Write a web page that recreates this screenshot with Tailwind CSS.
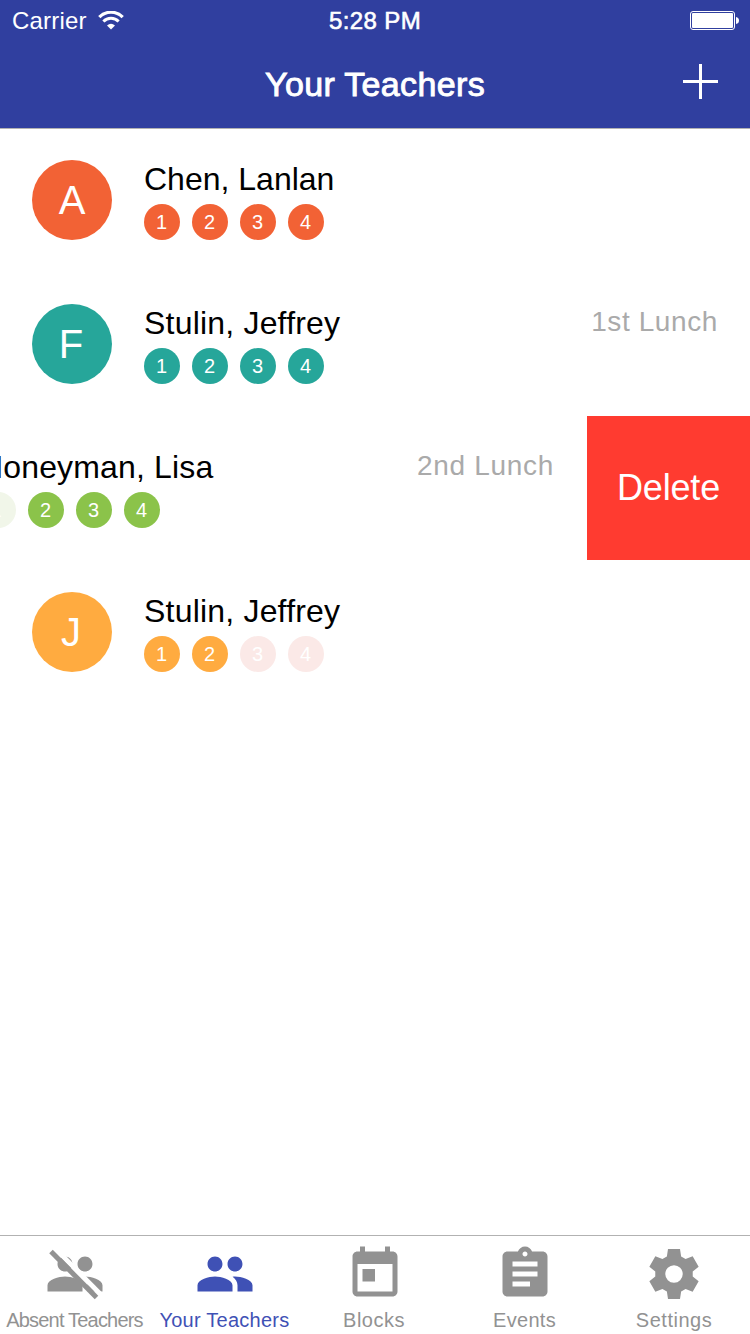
<!DOCTYPE html>
<html lang="en">
<head>
<meta charset="utf-8">
<title>Your Teachers</title>
<script src="https://cdn.jsdelivr.net/npm/@tailwindcss/browser@4"></script>
</head>
<body class="bg-white">
<div class="flex h-[1334px] w-[750px] flex-col overflow-hidden bg-white font-['Liberation_Sans',Arial,sans-serif] text-black">
  <header class="h-[129px] shrink-0 border-b border-[#b2b2b2] bg-[#303f9f] text-white">
    <div class="grid h-10 grid-cols-3 items-center text-2xl">
      <div class="flex items-center gap-[11px] pt-0.5 pl-3">
        <span class="tracking-[0.2px]">Carrier</span>
        <svg class="h-5 w-[26px]" viewBox="0 0 26 20" fill="none" stroke="#fff">
          <path d="M1.300 6.200A16.200 16.200 0 0 1 24.700 6.200" stroke-width="3.200"/>
          <path d="M5.400 10.500A10.600 10.600 0 0 1 20.600 10.500" stroke-width="3"/>
          <path d="M13 18.500L9 14.500Q13 11 17 14.500Z" fill="#fff" stroke="none"/>
        </svg>
      </div>
      <div class="pt-0.5 text-center tracking-[0.4px] [-webkit-text-stroke:0.6px_white]">5:28 PM</div>
      <div class="flex justify-end pr-2.5">
        <svg class="h-5 w-[50px]" viewBox="0 0 50 20">
          <rect x=".5" y="1.5" width="44" height="18" rx="2.5" fill="none" stroke="#fff"/>
          <rect x="2" y="3" width="41" height="15" rx="1" fill="#fff"/>
          <path d="M46 7q3 .5 3 3.500t-3 3.500z" fill="#fff"/>
        </svg>
      </div>
    </div>
    <div class="grid h-[88px] grid-cols-[1fr_auto_1fr] items-center">
      <span></span>
      <h1 class="text-[34px] tracking-[0.35px] [-webkit-text-stroke:0.9px_white]">Your Teachers</h1>
      <svg class="mr-8 mb-1.5 size-[35px] justify-self-end" viewBox="0 0 35 35" fill="#fff"><path d="M16 0h3v16h16v3H19v16h-3V19H0v-3h16z"/></svg>
    </div>
  </header>

  <main class="-mt-px flex-1">
    <section class="flex h-36 items-start px-8 pt-8">
      <div class="mr-8 flex size-20 items-center justify-center rounded-full bg-[#f26235] text-[40px] text-white">A</div>
      <div class="flex-1">
        <h2 class="h-11 text-[32px] leading-[38px]">Chen, Lanlan</h2>
        <div class="flex gap-3 text-xl text-white">
          <span class="flex size-9 items-center justify-center rounded-full bg-[#f26235] pr-px">1</span>
          <span class="flex size-9 items-center justify-center rounded-full bg-[#f26235] pr-px">2</span>
          <span class="flex size-9 items-center justify-center rounded-full bg-[#f26235] pr-px">3</span>
          <span class="flex size-9 items-center justify-center rounded-full bg-[#f26235] pr-px">4</span>
        </div>
      </div>
    </section>

    <section class="flex h-36 items-start px-8 pt-8">
      <div class="mr-8 flex size-20 items-center justify-center rounded-full bg-[#26a69a] pr-0.5 text-[40px] text-white">F</div>
      <div class="flex-1">
        <h2 class="h-11 text-[32px] leading-[38px] tracking-[0.2px]">Stulin, Jeffrey</h2>
        <div class="flex gap-3 text-xl text-white">
          <span class="flex size-9 items-center justify-center rounded-full bg-[#26a69a] pr-px">1</span>
          <span class="flex size-9 items-center justify-center rounded-full bg-[#26a69a] pr-px">2</span>
          <span class="flex size-9 items-center justify-center rounded-full bg-[#26a69a] pr-px">3</span>
          <span class="flex size-9 items-center justify-center rounded-full bg-[#26a69a] pr-px">4</span>
        </div>
      </div>
      <p class="text-[28px] leading-[36px] tracking-[0.6px] text-[#aaa]">1st Lunch</p>
    </section>

    <section class="flex h-36 justify-end overflow-hidden">
      <div class="flex w-[750px] shrink-0 items-start px-8 pt-8">
        <div class="mr-8 flex size-20 items-center justify-center rounded-full bg-[#8bc34a] text-[40px] text-white">H</div>
        <div class="flex-1">
          <h2 class="h-11 text-[32px] leading-[38px] tracking-[0.15px]">Honeyman, Lisa</h2>
          <div class="flex gap-3 text-xl text-white">
            <span class="flex size-9 items-center justify-center rounded-full bg-[#f1f6e9] pr-1">1</span>
            <span class="flex size-9 items-center justify-center rounded-full bg-[#8bc34a] pr-px">2</span>
            <span class="flex size-9 items-center justify-center rounded-full bg-[#8bc34a] pr-px">3</span>
            <span class="flex size-9 items-center justify-center rounded-full bg-[#8bc34a] pr-px">4</span>
          </div>
        </div>
        <p class="text-[28px] leading-[36px] tracking-[0.7px] text-[#aaa]">2nd Lunch</p>
      </div>
      <div class="ml-px flex w-[163px] shrink-0 items-center justify-center bg-[#ff3b30] text-4xl tracking-[-0.15px] text-white">Delete</div>
    </section>

    <section class="flex h-36 items-start px-8 pt-8">
      <div class="mr-8 flex size-20 items-center justify-center rounded-full bg-[#ffab40] pr-0.5 text-[40px] text-white">J</div>
      <div class="flex-1">
        <h2 class="h-11 text-[32px] leading-[38px] tracking-[0.2px]">Stulin, Jeffrey</h2>
        <div class="flex gap-3 text-xl text-white">
          <span class="flex size-9 items-center justify-center rounded-full bg-[#ffab40] pr-px">1</span>
          <span class="flex size-9 items-center justify-center rounded-full bg-[#ffab40] pr-px">2</span>
          <span class="flex size-9 items-center justify-center rounded-full bg-[#fbe9e7] pr-px">3</span>
          <span class="flex size-9 items-center justify-center rounded-full bg-[#fbe9e7] pr-px">4</span>
        </div>
      </div>
    </section>
  </main>

  <nav class="grid h-[99px] shrink-0 grid-cols-5 border-t border-[#b2b2b2] bg-white pt-2 text-xl leading-8 text-[#929292]">
    <a class="flex flex-col items-center whitespace-nowrap">
      <svg class="size-[60px]" viewBox="0 0 24 24" fill="currentColor">
        <path d="M16 11c1.660 0 2.990-1.340 2.990-3S17.660 5 16 5c-1.660 0-3 1.340-3 3s1.340 3 3 3zm-8 0c1.660 0 2.990-1.340 2.990-3S9.660 5 8 5C6.340 5 5 6.340 5 8s1.340 3 3 3zm0 2c-2.330 0-7 1.170-7 3.500V19h14v-2.500c0-2.330-4.670-3.500-7-3.500zm8 0c-.29 0-.62.02-.97.05 1.160.84 1.970 1.970 1.970 3.450V19h6v-2.500c0-2.330-4.670-3.500-7-3.500z"/>
        <path d="M3.900 1.600L22.100 20" stroke="#fff" stroke-width="1.900"/>
        <path d="M2.400 3L20.600 21.400" stroke="currentColor" stroke-width="2"/>
      </svg>
      <span class="mr-px tracking-[-0.8px]">Absent Teachers</span>
    </a>
    <a class="flex flex-col items-center whitespace-nowrap text-[#3f51b5]">
      <svg class="size-[60px]" viewBox="0 0 24 24" fill="currentColor">
        <path d="M16 11c1.660 0 2.990-1.340 2.990-3S17.660 5 16 5c-1.660 0-3 1.340-3 3s1.340 3 3 3zm-8 0c1.660 0 2.990-1.340 2.990-3S9.660 5 8 5C6.340 5 5 6.340 5 8s1.340 3 3 3zm0 2c-2.330 0-7 1.170-7 3.500V19h14v-2.500c0-2.330-4.670-3.500-7-3.500zm8 0c-.29 0-.62.02-.97.05 1.160.84 1.970 1.970 1.970 3.450V19h6v-2.500c0-2.330-4.670-3.500-7-3.500z"/>
      </svg>
      <span class="mr-px tracking-[0.25px]">Your Teachers</span>
    </a>
    <a class="flex flex-col items-center">
      <svg class="size-[60px]" viewBox="0 0 24 24" fill="currentColor">
        <path d="M19 3h-1V1h-2v2H8V1H6v2H5c-1.110 0-1.990.9-1.990 2L3 19c0 1.100.89 2 2 2h14c1.100 0 2-.9 2-2V5c0-1.100-.9-2-2-2zm0 16H5V8h14v11zM7 10h5v5H7z"/>
      </svg>
      <span class="mr-0.5 tracking-[0.5px]">Blocks</span>
    </a>
    <a class="flex flex-col items-center">
      <svg class="size-[60px]" viewBox="0 0 24 24" fill="currentColor">
        <path d="M19 3h-4.180C14.400 1.840 13.300 1 12 1c-1.300 0-2.400.84-2.820 2H5c-1.100 0-2 .9-2 2v14c0 1.100.9 2 2 2h14c1.100 0 2-.9 2-2V5c0-1.100-.9-2-2-2zm-7 0c.55 0 1 .45 1 1s-.45 1-1 1-1-.45-1-1 .45-1 1-1zm2 14H7v-2h7v2zm3-4H7v-2h10v2zm0-4H7V7h10v2z"/>
      </svg>
      <span class="mr-px tracking-[0.3px]">Events</span>
    </a>
    <a class="flex flex-col items-center pr-0.5">
      <svg class="size-[60px]" viewBox="0 0 24 24" fill="currentColor">
        <path fill-rule="evenodd" d="M9.600 2H14.400L14.850 5L16.630 6.030L19.460 4.920L21.860 9.080L19.490 10.970V13.030L21.860 14.920L19.460 19.080L16.630 17.970L14.850 19L14.400 22H9.600L9.150 19L7.370 17.970L4.540 19.080L2.140 14.920L4.510 13.030V10.970L2.140 9.080L4.540 4.920L7.370 6.030L9.150 5ZM12 8.500a3.500 3.500 0 1 0 0 7a3.500 3.500 0 1 0 0-7z"/>
      </svg>
      <span class="tracking-[0.5px]">Settings</span>
    </a>
  </nav>
</div>
</body>
</html>
